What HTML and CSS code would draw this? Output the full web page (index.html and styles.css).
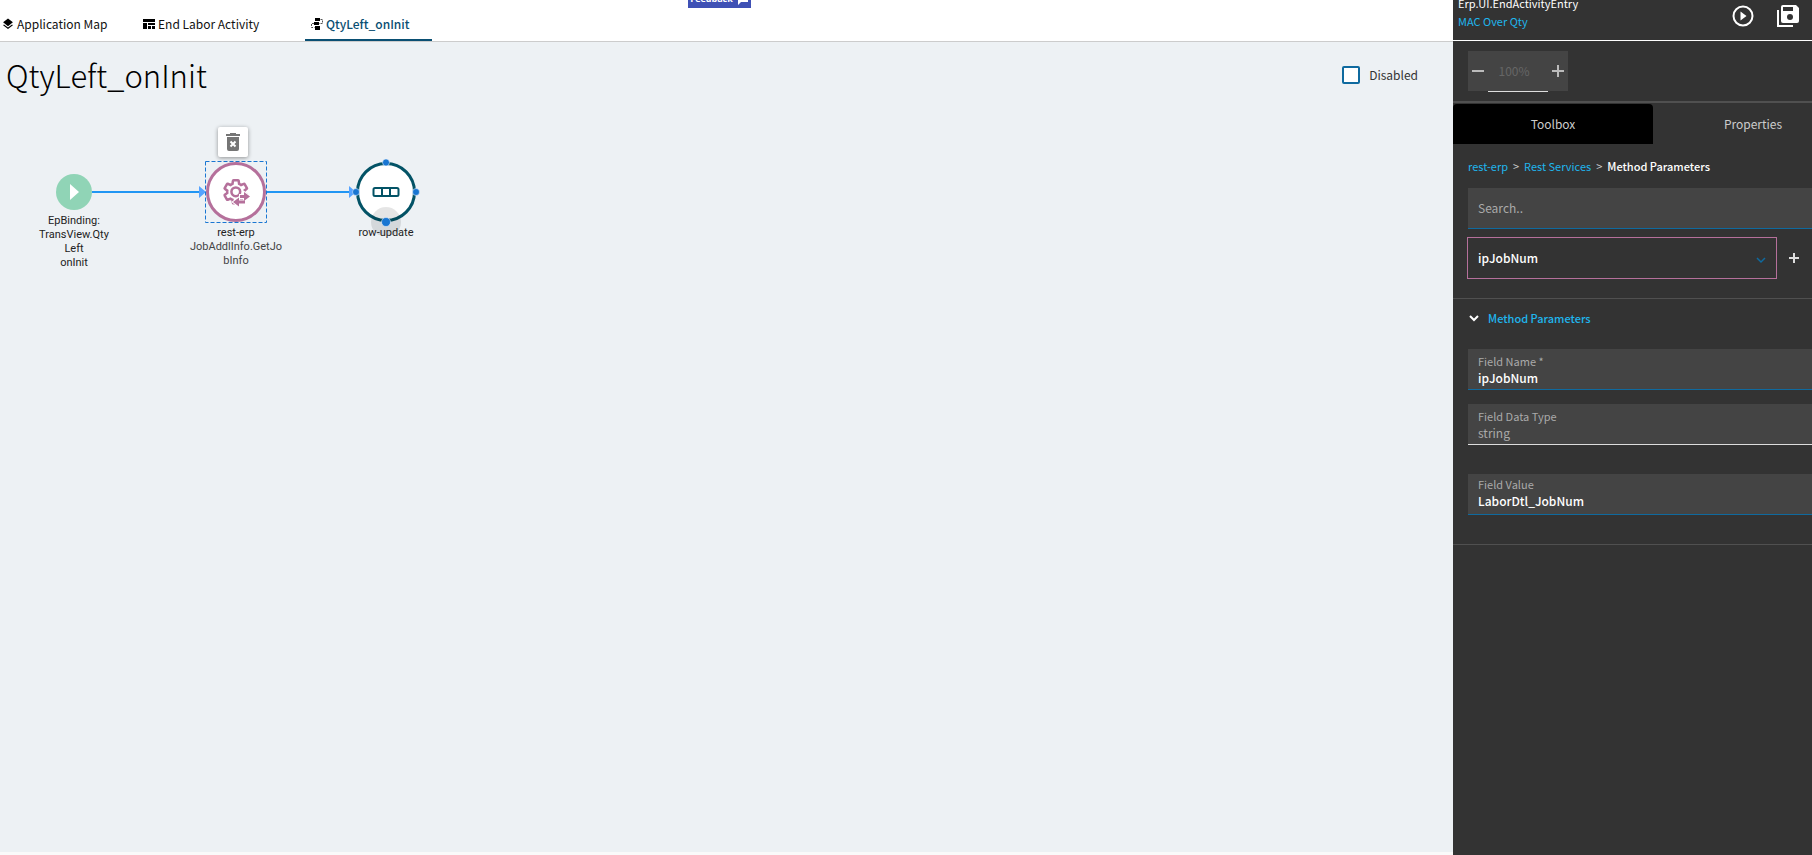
FILE: index.html
```html
<!DOCTYPE html>
<html lang="en">
<head>
  <meta charset="UTF-8">
  <meta name="viewport" content="width=device-width, initial-scale=1.0">
  <title>QtyLeft_onInit</title>
  <link rel="stylesheet" href="styles.css">
</head>
<body>
  <button class="feedback" type="button">Feedback
    <svg width="12" height="12" viewBox="0 0 12 12"><path d="M1 0h10v9H4l-3 3z" fill="#fff"/></svg>
  </button>

  <main class="workspace">
    <nav class="tabs">
      <a href="#map" class="tab tab-map">
        <svg width="12" height="12" viewBox="2 1 20 22"><path d="M12 18.500l-7.400-5.700L3 14.100l9 7 9-7-1.600-1.300zM12 16l9-7-9-7-9 7z"/></svg>
        Application Map
      </a>
      <a href="#labor" class="tab tab-labor">
        <svg width="12" height="12" viewBox="0 0 12 12"><path d="M0 1h12v3H0zM0 5h4v6H0zM5 5h7v2H5zM5 8h3v3H5zM9 8h3v3H9z"/></svg>
        End Labor Activity
      </a>
      <a href="#event" class="tab tab-event active">
        <svg width="12" height="12" viewBox="0 0 12 12"><path d="M4 0h5v3H4zM3 4h5v3H3zM4 8h5v4H4z" fill="#000"/><path d="M9.500 1.500h2v4H8M3 5.500H.5v4h3" fill="none" stroke="#555" stroke-dasharray="2 1"/></svg>
        QtyLeft_onInit
      </a>
    </nav>

    <section class="canvas">
      <header class="canvas-header">
        <h1>QtyLeft_onInit</h1>
        <label class="disabled"><input type="checkbox"> Disabled</label>
      </header>

      <div class="diagram">
        <svg class="links" width="460" height="180" viewBox="0 0 460 180">
          <path d="M92 80h110M267 80h84" stroke="#2196f3" stroke-width="2"/>
          <path d="M199 74l7 6-7 6zM349 74l7 6-7 6z" fill="#55a3ff"/>
        </svg>

        <div class="node node-start">
          <svg width="36" height="36" viewBox="0 0 36 36"><circle cx="18" cy="18" r="18" fill="#90d4b6"/><path d="M14 10l9 8-9 8z" fill="#fff"/></svg>
          <p>EpBinding:<br>TransView.Qty<br>Left<br>onInit</p>
        </div>

        <div class="node node-rest">
          <svg width="62" height="62" viewBox="0 0 62 62">
            <circle cx="31" cy="31" r="28.500" fill="#fff" stroke="#b5709b" stroke-width="3"/>
            <rect x=".5" y=".5" width="61" height="61" fill="none" stroke="#1976d2" stroke-dasharray="4 2"/>
            <g transform="translate(17 17) scale(1.150)" fill="none" stroke="#b5709b" stroke-width="2.200">
              <path d="M19.430 12.980c.04-.32.07-.64.07-.98s-.03-.66-.07-.98l2.110-1.650c.19-.15.24-.42.12-.64l-2-3.460c-.09-.16-.26-.25-.44-.25-.06 0-.12.01-.17.03l-2.490 1c-.52-.4-1.080-.73-1.690-.98l-.38-2.650C14.460 2.180 14.250 2 14 2h-4c-.25 0-.46.18-.49.42l-.38 2.650c-.61.25-1.170.59-1.690.98l-2.490-1c-.06-.02-.12-.03-.18-.03-.17 0-.34.09-.43.25l-2 3.460c-.13.22-.07.49.12.64l2.110 1.650c-.04.32-.07.65-.07.98s.03.66.07.98l-2.110 1.650c-.19.15-.24.42-.12.64l2 3.460c.09.16.26.25.44.25.06 0 .12-.01.17-.03l2.490-1c.52.4 1.080.73 1.690.98l.38 2.650c.03.24.24.42.49.42h4c.25 0 .46-.18.49-.42l.38-2.650c.61-.25 1.170-.59 1.690-.98l2.490 1c.06.02.12.03.18.03.17 0 .34-.09.43-.25l2-3.460c.12-.22.07-.49-.12-.64z"/>
              <circle cx="12" cy="12" r="3.800"/>
            </g>
            <path d="M39 31l6 4.500-6 4.500v-3h-4v-3h4zM34 36.500l-6 4.500 6 4.500v-3h6v-3h-6z" fill="#b5709b" stroke="#fff" stroke-width="2" paint-order="stroke"/>
          </svg>
          <p>rest-erp<br><span>JobAddlInfo.GetJo<br>bInfo</span></p>
        </div>

        <button class="delete" type="button" aria-label="Delete">
          <svg width="16" height="18" viewBox="0 0 16 18"><path d="M5 0h6v1h4v2H1V1h4zM2 4h12v12q0 2-2 2H4q-2 0-2-2z" fill="#757575"/><path d="M5.500 8.500l5 5M10.500 8.500l-5 5" stroke="#fff" stroke-width="2"/></svg>
        </button>

        <div class="node node-row">
          <svg width="68" height="76" viewBox="-1 0 68 76">
            <circle cx="33" cy="33" r="28.500" fill="#fff" stroke="#035366" stroke-width="3"/>
            <circle cx="33" cy="63" r="15" fill="#000" fill-opacity=".1"/>
            <path d="M22 29h22q1.500 0 1.500 1.500v5q0 1.500-1.500 1.500H22q-1.500 0-1.500-1.500v-5Q20.500 29 22 29zM29 29v8M37 29v8" fill="#fff" stroke="#035366" stroke-width="2"/>
            <g fill="#1976d2" stroke="#fff" stroke-width=".5"><circle cx="33" cy="3.500" r="3.500"/><circle cx="3" cy="33" r="3.500"/><circle cx="63" cy="33" r="3.500"/><circle cx="33" cy="63" r="4.500"/></g>
          </svg>
          <p>row-update</p>
        </div>
      </div>
    </section>
  </main>

  <aside class="sidebar">
    <header class="app-header">
      <div class="app-name">
        <p>Erp.UI.EndActivityEntry</p>
        <a href="#layer">MAC Over Qty</a>
      </div>
      <button class="icon-button" type="button" aria-label="Preview">
        <svg width="22" height="22" viewBox="0 0 22 22"><circle cx="11" cy="11" r="9.500" fill="none" stroke="#fff" stroke-width="2"/><path d="M8.500 6.500l6 4.500-6 4.500z" fill="#fff"/></svg>
      </button>
      <button class="icon-button" type="button" aria-label="Save all">
        <svg width="24" height="24" viewBox="0 0 24 24"><path d="M7 1h13l3 3v13q0 2-2 2H7q-2 0-2-2V3q0-2 2-2z" fill="#fff"/><path d="M2 6v16h15" fill="none" stroke="#fff" stroke-width="2"/><path d="M7 3h10v4H7z" fill="#333"/><circle cx="14" cy="13" r="3" fill="#333"/></svg>
      </button>
    </header>

    <div class="zoom-bar">
      <div class="zoom">
        <button type="button" aria-label="Zoom out"><svg width="12" height="12" viewBox="0 0 12 12"><path d="M0 6h12" stroke="#bbb" stroke-width="2"/></svg></button>
        <input type="text" value="100%" aria-label="Zoom" disabled>
        <button type="button" aria-label="Zoom in"><svg width="12" height="12" viewBox="0 0 12 12"><path d="M0 6h12M6 0v12" stroke="#bbb" stroke-width="2"/></svg></button>
      </div>
    </div>

    <div class="panel-tabs">
      <button class="selected" type="button">Toolbox</button>
      <button type="button">Properties</button>
    </div>

    <nav class="breadcrumb">
      <a href="#rest-erp">rest-erp</a><span>&gt;</span><a href="#services">Rest Services</a><span>&gt;</span><b>Method Parameters</b>
    </nav>

    <input class="search" type="search" placeholder="Search.." aria-label="Search">

    <div class="picker">
      <div class="select-box">
        <select aria-label="Parameter"><option>ipJobNum</option></select>
        <svg width="10" height="10" viewBox="0 0 10 10"><path d="M1 3l4 4 4-4" fill="none" stroke="#0f6a9f" stroke-width="1.500"/></svg>
      </div>
      <button type="button" aria-label="Add"><svg width="10" height="10" viewBox="0 0 10 10"><path d="M0 5h10M5 0v10" stroke="#ddd" stroke-width="2"/></svg></button>
    </div>

    <section class="parameters">
      <h2>
        <svg width="12" height="12" viewBox="0 0 12 12"><path d="M2 4l4 4 4-4" fill="none" stroke="#fff" stroke-width="2"/></svg>
        Method Parameters
      </h2>
      <div class="field">
        <label for="fieldName">Field Name *</label>
        <input type="text" id="fieldName" value="ipJobNum" required>
      </div>
      <div class="field readonly">
        <label for="fieldType">Field Data Type</label>
        <input type="text" id="fieldType" value="string" readonly>
      </div>
      <div class="field field-value">
        <label for="fieldValue">Field Value</label>
        <input type="text" id="fieldValue" value="LaborDtl_JobNum">
      </div>
    </section>
  </aside>
</body>
</html>
```
FILE: styles.css
```css
* {
  box-sizing: border-box;
}
body {
  margin: 0;
  min-height: 100vh;
  display: flex;
  background-color: #fafafa;
  color: #000;
  font-family: "Noto Sans CJK SC", "Noto Sans", sans-serif;
  font-size: 12px;
  line-height: 18px;
}
h1, h2, p {
  margin: 0;
}
a {
  text-decoration: none;
}
svg {
  display: block;
  flex: none;
}
button, input, select {
  font: inherit;
  border: none;
  padding: 0;
  margin: 0;
  background: none;
}
button {
  cursor: pointer;
}

/* Feedback button hangs off the top edge */
.feedback {
  position: absolute;
  top: -16px;
  left: 688px;
  width: 63px;
  height: 24px;
  display: flex;
  align-items: center;
  justify-content: center;
  gap: 4px;
  background-color: #3f51b5;
  color: white;
  font: bold 9px/16px "Open Sans", sans-serif;
  padding-top: 6px;
}

/* Workspace */
.workspace {
  flex: 1;
  min-width: 0;
  display: flex;
  flex-direction: column;
  padding-bottom: 3px;
}
.tabs {
  display: flex;
  height: 42px;
  background-color: white;
  border-bottom: 1px solid #ccc;
}
.tab {
  display: flex;
  align-items: center;
  gap: 3px;
  height: 41px;
  padding: 6px 6px 0 2px;
  color: #111;
}
.tab-map {
  width: 141px;
}
.tab-labor {
  width: 164px;
}
.tab-event {
  width: 127px;
  padding-left: 6px;
  padding-top: 8px;
  border-bottom: 2px solid #0a4f73;
}
.tab.active {
  color: #0a4f73;
  font-weight: 500;
}
.canvas {
  flex: 1;
  background-color: #edf1f4;
}
.canvas-header {
  display: flex;
  align-items: center;
  justify-content: space-between;
  height: 70px;
  padding: 0 35px 4px 6px;
}
.canvas-header h1 {
  font-size: 31px;
  line-height: 40px;
  font-weight: 300;
}
.disabled {
  display: flex;
  align-items: center;
  gap: 9px;
  color: #333;
}
.disabled input {
  appearance: none;
  width: 18px;
  height: 18px;
  border: 2px solid #0f6a9f;
  border-radius: 2px;
  background-color: white;
}

/* Event diagram */
.diagram {
  position: relative;
  height: 180px;
  font: 11px/14px Roboto, sans-serif;
  color: #222;
}
.links {
  position: absolute;
  top: 0;
  left: 0;
}
.node {
  position: absolute;
  width: 100px;
  display: flex;
  flex-direction: column;
  align-items: center;
  text-align: center;
}
.node span {
  color: #444;
}
.node-start {
  left: 24px;
  top: 62px;
}
.node-start p {
  margin-top: 4px;
}
.node-rest {
  left: 186px;
  top: 49px;
}
.node-rest p {
  margin-top: 3px;
}
.node-row {
  left: 336px;
  top: 47px;
}
.node-row p {
  margin-top: -9px;
}
.delete {
  position: absolute;
  left: 218px;
  top: 15px;
  width: 30px;
  height: 30px;
  display: grid;
  place-items: center;
  background-color: white;
  border-radius: 2px;
  box-shadow: 0 1px 4px rgba(0, 0, 0, 0.4);
}

/* Sidebar */
.sidebar {
  width: 359px;
  flex: none;
  overflow: hidden;
  background-color: #333;
  color: white;
}
.sidebar a, .sidebar h2 {
  color: #1fb6ee;
}
.app-header {
  display: flex;
  align-items: center;
  height: 41px;
  padding: 0 12px 9px 5px;
  border-bottom: 1px solid white;
}
.app-name {
  flex: 1;
  align-self: flex-start;
  margin-top: -3px;
  font-size: 11px;
  line-height: 12px;
}
.app-name a {
  display: block;
  margin-top: 6px;
}
.icon-button {
  margin-left: 22px;
}
.zoom-bar {
  height: 62px;
  padding: 10px 15px 0;
  border-bottom: 2px solid #505050;
}
.zoom {
  display: flex;
  width: 100px;
  height: 41px;
}
.zoom button {
  width: 20px;
  height: 40px;
  display: grid;
  place-items: center;
  background-color: #444;
}
.zoom input {
  width: 60px;
  background-color: #444;
  border-bottom: 1px solid #ddd;
  color: #666;
  text-align: center;
  padding-right: 8px;
}
.panel-tabs {
  display: flex;
  width: 400px;
  padding-top: 1px;
}
.panel-tabs button {
  width: 200px;
  height: 40px;
  padding-bottom: 1px;
  color: #ccc;
}
.panel-tabs .selected {
  background-color: black;
  border-radius: 4px 4px 0 0;
}
.breadcrumb {
  display: flex;
  gap: 5px;
  padding: 13px 15px;
  font-size: 11px;
}
.breadcrumb span {
  color: #ccc;
}
.breadcrumb b {
  font-weight: 500;
}
.search {
  display: block;
  width: 344px;
  height: 41px;
  margin-left: 15px;
  padding: 0 10px 2px;
  background-color: #444;
  border-bottom: 1px solid #0f6a9f;
  color: white;
}
.search::placeholder {
  color: #aaa;
}
.picker {
  display: flex;
  align-items: center;
  gap: 12px;
  padding: 8px 13px 19px 14px;
  border-bottom: 1px solid #505050;
}
.select-box {
  position: relative;
  flex: 1;
}
.select-box select {
  appearance: none;
  width: 100%;
  height: 42px;
  padding: 0 10px;
  border: 1px solid #b5709b;
  color: white;
  font-weight: 500;
}
.select-box svg {
  position: absolute;
  right: 11px;
  top: 18px;
}
.parameters {
  padding: 10px 0 29px 15px;
  border-bottom: 1px solid #505050;
}
.parameters h2 {
  display: flex;
  align-items: center;
  gap: 8px;
  margin-bottom: 22px;
  font-size: 11px;
  font-weight: 500;
}
.field {
  height: 41px;
  margin-bottom: 14px;
  padding: 3px 10px 0;
  background-color: #444;
  border-bottom: 1px solid #0f6a9f;
}
.field label {
  display: block;
  color: #aaa;
  font-size: 11px;
}
.field input {
  display: block;
  width: 100%;
  height: 16px;
  color: white;
  font-weight: 500;
}
.readonly {
  border-bottom-color: #ddd;
}
.readonly input {
  color: #aaa;
  font-weight: 400;
}
.field-value {
  margin: 29px 0 0;
  padding-top: 1px;
}
```
